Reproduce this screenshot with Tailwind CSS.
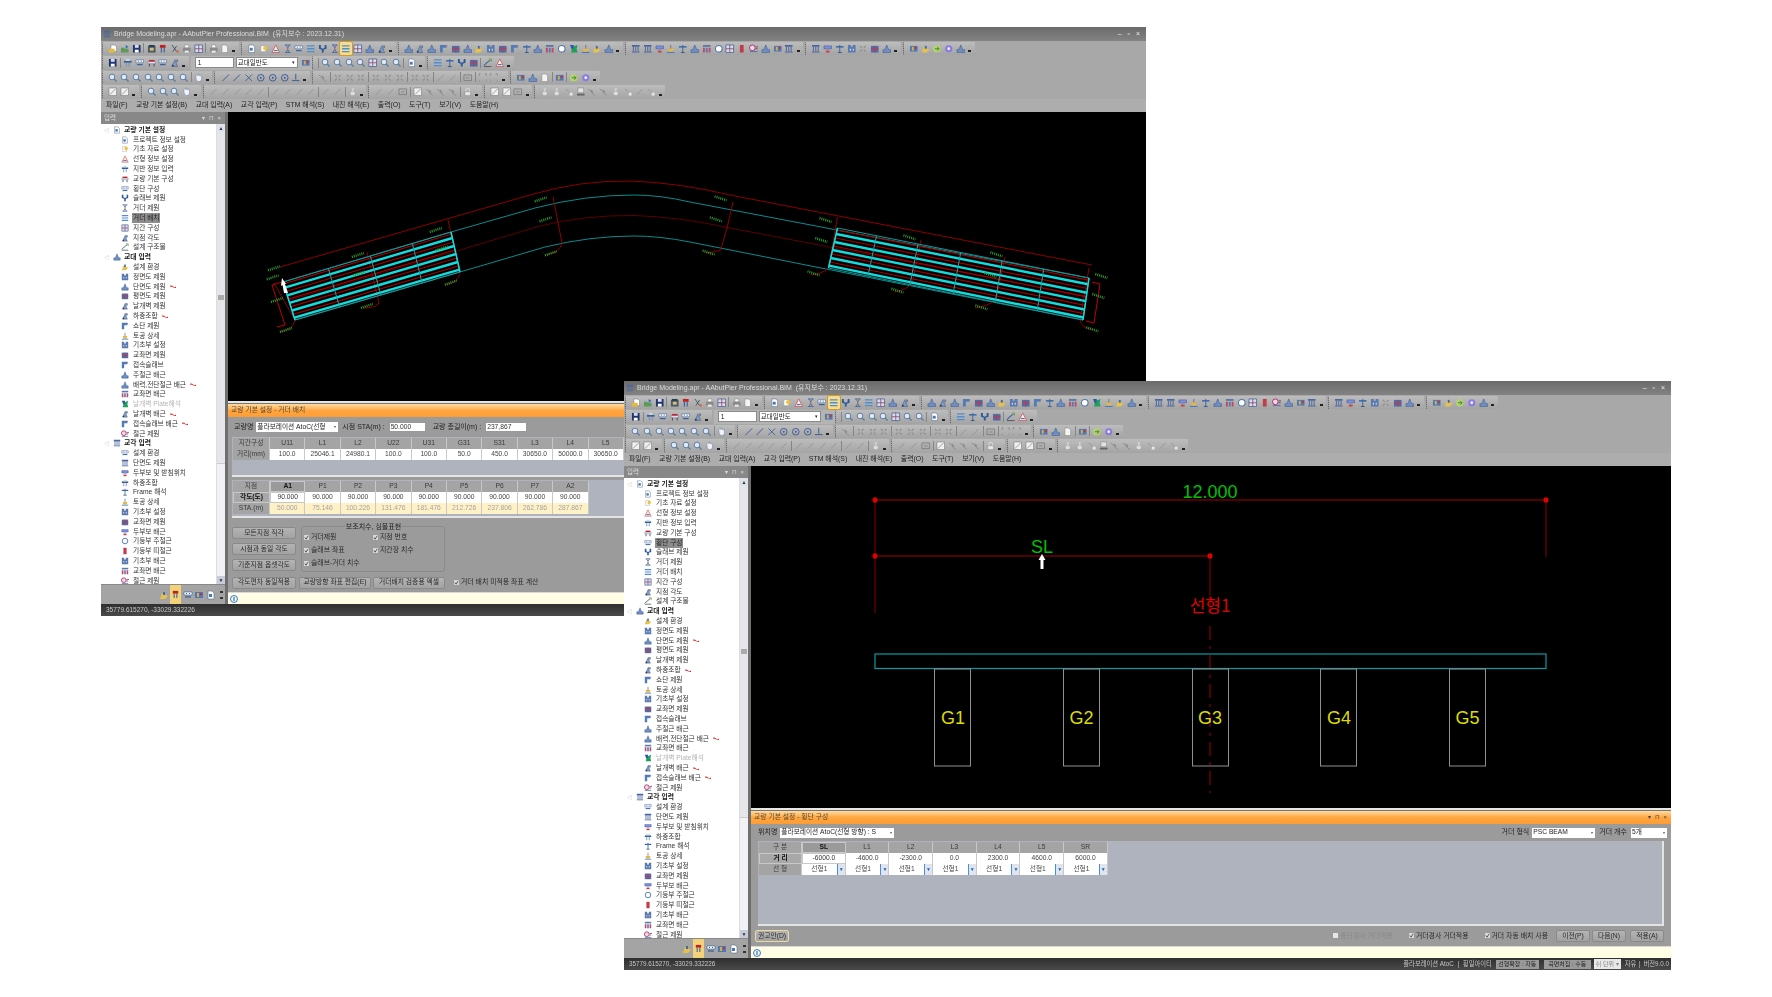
<!doctype html>
<html lang="ko">
<head>
<meta charset="utf-8">
<script src="https://cdn.jsdelivr.net/npm/@tailwindcss/browser@4"></script>
</head>
<body class="relative w-[1772px] h-[997px] overflow-hidden bg-white [font-family:Liberation_Sans,Noto_Sans_CJK_KR,sans-serif]">
<div id="w1" class="absolute left-[101px] top-[27px] w-[1045px] h-[589px]"></div>
<div id="w2" class="absolute left-[624px] top-[381px] w-[1047px] h-[589px]"></div>
<script>
const G={
a:'<path d="M3 1h4l2 2v5H3z" fill="#fff" stroke="#778" stroke-width=".6"/><path d="M1 5h6v4H1z" fill="#e8b83a"/>',
b:'<path d="M1 4h3l1 1h4v4H1z" fill="#5b9a58"/><path d="M6 1l3 2-3 2z" fill="#2f6fb5"/>',
s:'<path d="M1 1h8v8H1z" fill="#1f3570"/><path d="M3 1h4v3H3z" fill="#dde"/><path d="M3 6h4v3H3z" fill="#fff"/>',
k:'<path d="M1 2h8v7H1z" fill="#4a5a6a"/><path d="M3 4h4v3H3z" fill="#d9c070"/><path d="M2 1h6v2H2z" fill="#2d3d4d"/>',
x:'<path d="M2 1l5 7M7 2L3 8" stroke="#456" stroke-width="1" fill="none"/><circle cx="8" cy="8" r="1.3" fill="#d63"/>',
r:'<path d="M2 1h6v3H2z" fill="#c32020"/><path d="M3 4h1v5H3zM6 4h1v5H6z" fill="#1f4fa0"/>',
p:'<path d="M3 1h4v3H3z" fill="#fff" stroke="#777" stroke-width=".5"/><path d="M1 4h8v4H1z" fill="#8a8a8a"/><path d="M3 7h4v2H3z" fill="#eee"/>',
f:'<path d="M2 1h4l2 2v6H2z" fill="#f4f4f4" stroke="#888" stroke-width=".6"/>',
e:'<path d="M2 1h4l2 2v6H2z" fill="#fff" stroke="#55708f" stroke-width=".6"/><path d="M3 4h3v3H3z" fill="#4b78b0"/>',
y:'<path d="M2 2h5v6H2z" fill="#fff" stroke="#999" stroke-width=".5"/><circle cx="6.5" cy="4.5" r="2.2" fill="#f2c230"/>',
t:'<path d="M5 1l4 8H1z" fill="#f3e9e4" stroke="#c44" stroke-width=".7"/><path d="M3 7h4" stroke="#35a"/>',
u:'<path d="M1 3h8v2H1z" fill="#3b5f97"/><path d="M3 5h1v4H3zM6 5h1v4H6z" fill="#6b8cbc"/><path d="M3 1h4v2H3z" fill="#cdd7e5"/>',
h:'<path d="M2 2h6v2H2z" fill="#c23"/><path d="M1 4h8v2H1z" fill="#eef" stroke="#456" stroke-width=".4"/><path d="M2 6h1v3H2zM7 6h1v3H7z" fill="#445"/>',
w:'<path d="M1 2h8v3H1z" fill="#fff" stroke="#345f9a" stroke-width=".6"/><path d="M2 7h6" stroke="#345f9a" stroke-width="1.2"/><path d="M3 3h1v1H3zM6 3h1v1H6z" fill="#345f9a"/>',
v:'<path d="M1 1h2v3l2 1 2-1V1h2v4L6 6v3H4V6L1 5z" fill="#2b5a9a"/>',
q:'<path d="M2 1h6M2 9h6M3 1l2 3 2-3M3 9l2-3 2 3" stroke="#4a6d9e" fill="none"/><path d="M5 4v2" stroke="#c44"/>',
z:'<path d="M1 2h8M1 5h8M1 8h8" stroke="#4f8fd0" stroke-width="1.4"/>',
g:'<path d="M1 1h8v8H1z" fill="#d6dcf0" stroke="#37538a" stroke-width=".7"/><path d="M5 1v8M1 5h8" stroke="#8a3b5a" stroke-width=".8"/>',
A:'<path d="M5 1l2 5h2v3H1V6h2z" fill="#6f8fc4" stroke="#2f4f87" stroke-width=".5"/>',
B:'<path d="M2 9L5 2h3v2H6l2 5z" fill="#7a9ccb" stroke="#334" stroke-width=".4"/><circle cx="3" cy="8" r="1" fill="#335"/>',
C:'<path d="M1 1h7v3H4v5H1z" fill="#527cb6"/><path d="M8 1l1 1-1 1z" fill="#c44"/>',
D:'<path d="M1 8l3-3 4-3" stroke="#4a6aa0" stroke-width="1.2" fill="none"/><path d="M6 1h3v3" stroke="#7a3" fill="none"/><path d="M1 9h8" stroke="#555"/>',
E:'<path d="M1 9l2-6 6 3-3 3z" fill="#e7c24a"/><path d="M4 2h2v3H4z" fill="#3c6ab0"/>',
F:'<path d="M1 1h3v2h2V1h3v8H1z" fill="#5a79ae"/><path d="M3 5h1v2H3zM6 5h1v2H6z" fill="#e8eefa"/>',
H:'<path d="M1 2h8v7H1z" fill="#4a6fa8"/><path d="M5 2v7M1 5h8" stroke="#d0324a"/>',
I:'<path d="M1 1h8v2H1zM1 8h8v1H1z" fill="#4a67a0"/><path d="M2 3h1v5H2zM4.500 3h1v5h-1zM7 3h1v5H7z" fill="#4a67a0"/>',
J:'<path d="M1 2h8v3H6l-1 1-1-1H1z" fill="#7e8fe0" stroke="#334f8f" stroke-width=".5"/><path d="M3 7h4v2H3z" fill="#c44"/>',
K:'<path d="M5 1v8" stroke="#3565a8"/><path d="M1 3h8" stroke="#3565a8" stroke-width="1.5"/><path d="M3 9h4" stroke="#358"/>',
L:'<path d="M5 1v4" stroke="#6a7a90"/><path d="M2 5h6L7 8H3z" fill="#e6b63e"/><path d="M1 9h8" stroke="#37c"/>',
M:'<path d="M1 1h8v2H1z" fill="#5a78aa"/><path d="M1 4h2v5H1zM7 4h2v5H7z" fill="#c0486a"/><path d="M4 4h2v5H4z" fill="#5a78aa"/>',
N:'<circle cx="5" cy="5" r="3.5" fill="#fff" stroke="#4a74b0" stroke-width="1.1"/>',
O:'<path d="M3 1h4v8H3z" fill="#c23b48"/>',
P:'<circle cx="3.500" cy="4" r="3" fill="#f4d5e0" stroke="#b02a6a"/><path d="M7 3h3M7 5h2" stroke="#555"/><path d="M1 8h8" stroke="#4a74b0"/>',
Q:'<path d="M2 9l2-6 5-2-1 4 1 4z" fill="#1fa05a"/><path d="M1 1h4v3L3 6z" fill="#2c59b0"/>',
m:'<circle cx="4.200" cy="4.200" r="3" fill="#dfe8f4" stroke="#56789f"/><path d="M6.500 6.500L9 9" stroke="#56789f" stroke-width="1.300"/>',
o:'<path d="M2 4c0-2 1-3 1-3s1 0 1 2l1-2 1 2 1-1 1 3c0 3-1 4-3 4S2 7 2 4z" fill="#eef2fa" stroke="#6a7c99" stroke-width=".5"/>',
l:'<path d="M1.500 8.500L8.500 1.500" stroke="#3a5a9a" stroke-width="1"/>',
X:'<path d="M1.500 1.500l7 7M8.500 1.500l-7 7" stroke="#3a5a9a" stroke-width=".9"/>',
c:'<circle cx="5" cy="5" r="3.500" fill="none" stroke="#3a5a9a" stroke-width="1"/><circle cx="5" cy="5" r="1" fill="#3a5a9a"/>',
T:'<path d="M5 1v6M1 8h8" stroke="#3a5a9a" stroke-width="1"/>',
d:'<path d="M2 8l6-6" stroke="#8b8b8b" stroke-width="1" stroke-dasharray="2 .6"/>',
n:'<path d="M1 2l2 2 1-1 2 2-1 1 3 3" stroke="#8a8a8a" fill="none"/><circle cx="5" cy="5" r="1.300" fill="#8f8f8f"/>',
G:'<path d="M2 2l2 2m2 2l2 2M8 2L6 4M4 6L2 8" stroke="#8c8c8c" stroke-width="1.200"/>',
R:'<path d="M1 1h8v8H1z" fill="#f0f0f0" stroke="#777" stroke-width=".6"/><path d="M2 8l6-6" stroke="#999"/>',
S:'<path d="M3 5V3.500a2 2 0 0 1 4 0V5" stroke="#ddd" fill="none"/><path d="M2 5h6v4H2z" fill="#e8e8e8" stroke="#777" stroke-width=".4"/>',
U:'<path d="M1 3a4 4 0 0 1 8 0" stroke="#8a8a8a" fill="none"/><path d="M1 7a4 4 0 0 0 8 0" stroke="#999" fill="none"/>',
W:'<path d="M1 2h8v6H1z" fill="#4f78b8"/><path d="M3 3h2v4H3z" fill="#d6b13a"/><path d="M6 3h2v2H6z" fill="#d23"/>',
Y:'<circle cx="5" cy="5" r="3.800" fill="#b8d36a"/><path d="M3 5h4M5.500 3L7.500 5l-2 2" stroke="#2a8a2a" fill="none"/>',
Z:'<circle cx="5" cy="5" r="3.800" fill="#8a7ce0"/><circle cx="5" cy="5" r="1.500" fill="#eef"/>',
0:'<path d="M2 5h6l-1 4H3z" fill="#e0e0e0" stroke="#9a9a9a" stroke-width=".5"/><path d="M4 1h2v4H4z" fill="#d0d0d0"/>',
1:'<path d="M2 2l5 5" stroke="#a0a0a0" stroke-width="1.200"/><path d="M6 6h3v3H6z" fill="#e8e8e8"/>',
2:'<path d="M1 2h8v6H1z" fill="none" stroke="#777" stroke-width=".8"/><path d="M3 4h4v2H3z" fill="#9a9a9a"/>',
3:'<path d="M2 1h6v5H2z" fill="#e2e2e2" stroke="#777" stroke-width=".5"/><path d="M1 7h8v2H1z" fill="#666"/>'
};
const svg=(c,cls)=>`<svg viewBox="0 0 10 10" class="${cls}">${G[c]||''}</svg>`;
function bar(spec,hi){
  let out='',n=0;
  for(const c of spec){
    if(c==='|') out+='<span class="w-px h-[10px] mx-[1px] bg-[#858585] shrink-0"></span>';
    else if(c==='V') out+='<span class="w-[6px] flex justify-center items-end h-[8px] shrink-0"><span class="w-[3px] h-[2px] bg-[#222]"></span></span>';
    else { out+=`<span class="w-[11.8px] h-[13px] flex items-center justify-center shrink-0 ${n===hi?'bg-[#f5dc8e] outline outline-[#d19a2a] rounded-[1px]':''}">${svg(c,'w-[9.500px] h-[9.500px]')}</span>`; n++; }
  }
  return `<div class="flex items-center h-[13.500px] pl-[4px] pr-[2px] mr-[2px] rounded-[1px] bg-gradient-to-b from-[#bdbdbd] to-[#a4a4a4] border-l border-dotted border-[#555]">${out}</div>`;
}
const rowW='flex items-center h-[14.500px] pl-[1px]';
function toolbars(hi){
 return `<div class="h-[58px] bg-[#a8a8a8] shrink-0 overflow-hidden blur-[0.35px]">
  <div class="${rowW}">${bar('abs|krxpg|pfV')}${bar('eytqwz'+'vqzgAB'+'V',hi)}${bar('ABACHAEFHCKAMNQLEAV')}${bar('IIJLKAMNgOPAWIV')}${bar('IJKFGHAV')}${bar('WEYZAV')}</div>
  <div class="${rowW}">${bar('s|uwhwBV')}<div class="flex items-center h-[13.500px] gap-[2px] bg-[#b4b4b4] pl-[4px]"><span class="w-[39px] h-[11px] bg-white border border-[#8a8a8a] text-[6.700px] leading-[10px] pl-[2px] text-[#222]">1</span><span class="w-[62px] h-[11px] bg-white border border-[#8a8a8a] text-[6.500px] leading-[9px] pl-[1px] text-[#222] flex justify-between">교대일반도<span class="text-[5px] pr-[2px]">▾</span></span><span class="w-[12px] flex justify-center">${svg('W','w-[9.500px] h-[9.500px]')}</span></div>${bar('|mmmmgmm|eV')}${bar('zKvH|DtV')}</div>
  <div class="${rowW}">${bar('mmmmmmm|oV')}${bar('llXcccTV')}${bar('n|GGG|GGG|GG|dd|2|UUV')}${bar('WAf|W|YZV')}</div>
  <div class="${rowW}">${bar('RRV')}${bar('mmmoV')}${bar('ddddd|dddd|dd|0V')}${bar('dd2|Rnnn|SV')}${bar('RR2V')}${bar('0013nn01d1V')}</div>
 </div>`;
}
const MENU=['파일(F)','교량 기본 설정(B)','교대 입력(A)','교각 입력(P)','STM 해석(S)','내진 해석(E)','출력(O)','도구(T)','보기(V)','도움말(H)'];
const TREE=[
['g','교량 기본 설정','e'],['c','프로젝트 정보 설정','e'],['c','기초 자료 설정','y'],['c','선형 정보 설정','t'],['c','지반 정보 입력','u'],['c','교량 기본 구성','h'],['c','횡단 구성','w'],['c','슬래브 제원','v'],['c','거더 제원','q'],['c','거더 배치','z'],['c','지간 구성','g'],['c','지점 각도','B'],['c','설계 구조물','D'],
['g','교대 입력','A'],['c','설계 환경','E'],['c','정면도 제원','F'],['c','단면도 제원','A',1],['c','평면도 제원','H'],['c','날개벽 제원','B'],['c','하중조합','B',1],['c','쇼단 제원','C'],['c','토공 상세','L'],['c','기초부 설정','F'],['c','교좌면 제원','H'],['c','접속슬래브','C'],['c','주철근 배근','A'],['c','배력,전단철근 배근','A',1],['c','교좌면 배근','M'],['c','날개벽 Plate해석','Q',0,1],['c','날개벽 배근','B',1],['c','접속슬래브 배근','C',1],['c','철근 제원','P'],
['g','교각 입력','I'],['c','설계 환경','w'],['c','단면도 제원','I'],['c','두부보 및 받침위치','J'],['c','하중조합','u'],['c','Frame 해석','K'],['c','토공 상세','L'],['c','기초부 설정','F'],['c','교좌면 제원','H'],['c','두부보 배근','J'],['c','기둥부 주철근','N'],['c','기둥부 띠철근','O'],['c','기초부 배근','F'],['c','교좌면 배근','M'],['c','철근 제원','P']];
function tree(sel){
 return TREE.map(([k,t,ic,red,dis])=> k==='g'
  ? `<div class="flex items-center h-[9.800px] shrink-0 pl-[3px]"><span class="w-[8px] text-[5px] leading-[8px] text-[#aaa]">◁</span>${svg(ic,'w-[8px] h-[8px] ml-[1px] mr-[3px]')}<span class="text-[6.800px] font-bold text-[#222]">${t}</span></div>`
  : `<div class="flex items-center h-[9.800px] shrink-0 pl-[20px]">${svg(ic,'w-[8px] h-[8px] mr-[3px] shrink-0')}<span class="text-[6.700px] px-[1px] whitespace-nowrap ${t===sel?'bg-[#8d8d8d] text-[#222]':dis?'text-[#b5b5b5]':'text-[#333]'}">${t}</span>${red?'<svg viewBox="0 0 8 4" class="ml-[3px] w-[6px] h-[3px]"><path d="M0 1q2-1 4 1t4 0v2Q5 4 4 3T0 2z" fill="#e01818"/></svg>':''}</div>`).join('');
}
function sidebar(sel){
 return `<div class="w-[124px] shrink-0 flex flex-col blur-[0.35px]">
  <div class="h-[12px] shrink-0 flex items-center justify-between bg-[#888] px-[3px] text-[6.500px] text-[#ddd]"><span>입력</span><span class="tracking-[1px] text-[6px]">▾ ⊓ ×</span></div>
  <div class="h-[460px] bg-white flex overflow-hidden shrink-0">
    <div class="flex-1 min-w-0 flex flex-col overflow-hidden pt-[1px]">${tree(sel)}</div>
    <div class="w-[9px] shrink-0 flex flex-col bg-[#f2f2f6] border-l border-[#ddd]">
      <div class="h-[8px] bg-[#dfe2ea] flex items-center justify-center"><span class="text-[5px] leading-[6px] text-[#234]">▲</span></div>
      <div class="h-[332px] bg-[#e6e6ea] border-b border-[#ccc] flex items-center justify-center"><span class="w-[6px] h-[5px] bg-[#aaa]"></span></div>
      <div class="flex-1"></div>
      <div class="h-[8px] bg-[#c9ccd6] flex items-center justify-center"><span class="text-[5px] leading-[6px] text-[#234]">▼</span></div>
    </div>
  </div>
  <div class="flex-1 bg-[#a4a4a4] border-t border-[#888] flex items-center justify-end pr-[2px] gap-[1.500px]">
    ${svg('E','w-[10px] h-[10px]')}<span class="h-full w-[11px] bg-[#f3d27a] flex items-center justify-center">${svg('r','w-[9px] h-[9px]')}</span>${svg('w','w-[10px] h-[10px]')}${svg('W','w-[10px] h-[10px]')}${svg('e','w-[10px] h-[10px]')}<span class="ml-[3px] w-[3px] h-[8px] border-y-2 border-[#333]"></span>
  </div>
 </div>`;
}
function chrome(title,hi,sel,canvas,panel,status,panelH){
 return `<div class="w-full h-full flex flex-col bg-[#9b9b9b]">
 <div class="h-[14px] shrink-0 flex items-center justify-between bg-gradient-to-b from-[#6b6b6b] to-[#838383] pl-[2px] pr-[4px] text-[7px] text-[#dcdcdc] blur-[0.35px]"><span class="flex items-center gap-[3px]">${svg('I','w-[8px] h-[8px]')}<span>${title}</span></span><span class="tracking-[2px] text-[7px] text-[#eee]">‒ ▫ ×</span></div>
 ${toolbars(hi)}
 <div class="h-[13px] shrink-0 bg-[#adadad] flex items-center pl-[5px] gap-[8.600px] text-[6.900px] text-[#222] blur-[0.35px]">${MENU.map(m=>`<span class="whitespace-nowrap">${m}</span>`).join('')}</div>
 <div class="flex-1 min-h-0 flex">
  ${sidebar(sel)}
  <div class="w-[3px] bg-[#6f6f6f] shrink-0"></div>
  <div class="flex-1 min-w-0 flex flex-col">
    <div class="flex-1 min-h-0 bg-black overflow-hidden">${canvas}</div>
    <div class="h-[3px] shrink-0 bg-[#e6e6e6] border-b border-[#777]"></div>
    <div class="shrink-0 flex flex-col blur-[0.35px] ${panelH}">${panel}</div>
  </div>
 </div>
 ${status}
 </div>`;
}
const chk='<svg viewBox="0 0 6 6" class="w-[5px] h-[5px]"><path d="M1 3l1.500 2L5 1" fill="none" stroke="#333" stroke-width=".9"/></svg>';
const cb=(t,on=1,dis=0)=>`<span class="inline-flex items-center gap-[1px] whitespace-nowrap text-[6.900px] ${dis?'text-[#8a8a8a]':'text-[#2a2a2a]'}"><span class="w-[7px] h-[7px] shrink-0 ${dis?'bg-[#e6e6e6]':'bg-[#d8d8d8]'} border border-[#999] flex items-center justify-center">${on?chk:''}</span>${t}</span>`;
const btn=(t,w,yl)=>`<span class="${w} h-[12px] shrink-0 flex items-center justify-center rounded-[2px] border ${yl?'border-[#ead9a0]':'border-[#8a8a8a]'} bg-gradient-to-b from-[#b4b4b4] to-[#a2a2a2] text-[6.800px] text-[#2a2a2a] whitespace-nowrap">${t}</span>`;
const input=(t,w)=>`<span class="${w} h-[10px] bg-white border border-[#999] text-[6.700px] leading-[8px] pl-[1px] text-[#333]">${t}</span>`;
const select=(t,w)=>`<span class="${w} h-[10px] bg-white flex items-center justify-between text-[6.700px] px-[1px] text-[#222] whitespace-nowrap overflow-hidden"><span>${t}</span><span class="text-[4px] text-[#555] px-[1px]">▾</span></span>`;
const otitle=(t,r)=>`<div class="h-[13px] shrink-0 bg-gradient-to-b from-[#ffdca0] via-[#ffa640] to-[#ff9c33] flex items-center justify-between px-[3px] text-[6.800px] text-[#5a4a30]"><span>${t}</span>${r?'<span class="tracking-[1px] text-[6px] text-[#444]">▾ ⊓ ×</span>':''}</div>`;
const info=`<div class="h-[12px] shrink-0 bg-[#fffde4] border-t border-[#d8d8d8] flex items-center pl-[2px]"><svg viewBox="0 0 10 10" class="w-[8px] h-[8px]"><circle cx="5" cy="5" r="4.300" fill="#fff" stroke="#1f6fc0" stroke-width="1.200"/><path d="M5 2.500v5" stroke="#1f6fc0" stroke-width="1.500"/></svg></div>`;
const cell=(t,w,k)=>{
 const m={h:'bg-[#a4a4a4] text-[#3a3a3a]',hs:'bg-[#9a9a9a] font-bold text-[#111] border border-[#707070]',rh:'bg-[#a4a4a4] text-[#3a3a3a]',rb:'bg-[#a8a8a8] font-bold text-[#111] border border-[#555]',d:'bg-white text-[#444]',ds:'bg-white text-[#333] border border-[#333]',y:'bg-[#fff1c6] text-[#a3a3a3]'};
 return `<span class="${w} h-full shrink-0 flex items-center justify-center text-[6.700px] whitespace-nowrap border-r border-[#c8c8c8] ${m[k]}">${t}</span>`;
};
const trow=(h)=>`<div class="flex h-[11px]">${h}</div>`;
const W1C=['U11','L1','L2','U22','U31','G31','S31','L3','L4','L5'],W1D=['100.0','25046.1','24980.1','100.0','100.0','50.0','450.0','30650.0','50000.0','30650.0'];
const W1P=['A1','P1','P2','P3','P4','P5','P6','P7','A2'],W1S=['50.000','75.146','100.226','131.476','181.476','212.726','237.806','262.786','287.867'];
const panel1=otitle('교량 기본 설정 - 거더 배치')+`<div class="flex-1 flex flex-col min-h-0 pl-[4px] pt-[5px] bg-[#9b9b9b]">
 <div class="h-[10px] flex items-center text-[7px] text-[#222] whitespace-nowrap pl-[2px]"><span class="mr-[3px]">교량명</span>${select('플라보레이션 AtoC(선형','w-[82px]')}<span class="ml-[4px] mr-[4px]">시점 STA(m) :</span>${input('50.000','w-[37px]')}<span class="ml-[7px] mr-[4px]">교량 총길이(m) :</span>${input('237,867','w-[42px]')}</div>
 <div class="mt-[5px] h-[40px] bg-[#afb3be] border-b-2 border-[#e4e4e4] pt-[1px] pl-[1px] overflow-hidden">
  ${trow(cell('지간구성','w-[37px]','rh')+W1C.map(c=>cell(c,'w-[35.400px]','h')).join(''))}
  ${trow(cell('거리(mm)','w-[37px]','rh')+W1D.map(c=>cell(c,'w-[35.400px]','d')).join(''))}
 </div>
 <div class="mt-[3px] h-[38px] bg-[#afb3be] border-b-2 border-[#e4e4e4] pt-[1px] pl-[1px] overflow-hidden">
  ${trow(cell('지점','w-[37px]','rh')+W1P.map((c,i)=>cell(c,'w-[35.400px]',i?'h':'hs')).join(''))}
  ${trow(cell('각도(도)','w-[37px]','rb')+W1P.map((c,i)=>cell('90.000','w-[35.400px]',i?'d':'ds')).join(''))}
  ${trow(cell('STA.(m)','w-[37px]','rh')+W1S.map(c=>cell(c,'w-[35.400px]','y')).join(''))}
 </div>
 <div class="mt-[8px] flex h-[47px]">
  <div class="w-[64px] flex flex-col gap-[4px] pt-[1px]">${btn('모든지점 직각','w-[64px]')}${btn('시점과 동일 각도','w-[64px]')}${btn('기준지점 옵셋각도','w-[64px]')}</div>
  <fieldset class="ml-[5px] -mt-[3px] w-[144px] h-[49px] border border-[#8a8a8a] rounded-[3px] pl-[1px]">
   <legend class="mx-auto px-[1px] text-[7px] leading-[7px] text-[#222]">보조치수, 심볼표현</legend>
   <div class="grid grid-cols-[69px_1fr] auto-rows-[13px] items-center pt-[1px]">${cb('거더제원')}${cb('지점 번호')}${cb('슬래브 좌표')}${cb('지간장 치수')}${cb('슬래브-거더 치수')}</div>
  </fieldset>
 </div>
 <div class="mt-[3px] flex items-center h-[13px]">${btn('각도편차 동일적용','w-[64px]')}<span class="w-[3px]"></span>${btn('교량방향 좌표 편집(E)','w-[72px]')}<span class="w-[2px]"></span>${btn('거더배치 검증용 엑셀','w-[72px]')}<span class="w-[8px]"></span>${cb('거더 배치 미적용 좌표 계산')}</div>
</div>`+info;
const W2C=['L1','L2','L3','L4','L5','SR'],W2D=['-4600.0','-2300.0','0.0','2300.0','4600.0','6000.0'];
const sel2=`<span class="w-[43.700px] h-full shrink-0 flex bg-white text-[6.700px] text-[#444] border-r border-[#c8c8c8]"><span class="flex-1 flex items-center justify-center">선형1</span><span class="w-[8px] bg-[#dfe4ee] border-l border-[#4a90d9] flex items-center justify-center"><span class="text-[5px] leading-[5px] text-[#1a66b8]">▼</span></span></span>`;
const panel2=otitle('교량 기본 설정 - 횡단 구성',1)+`<div class="flex-1 flex flex-col min-h-0 px-[7px] bg-[#9b9b9b]">
 <div class="h-[17px] flex items-center text-[7px] text-[#222] whitespace-nowrap"><span class="mr-[3px]">위치명</span>${select('플라보레이션 AtoC(선형 방향) : S','w-[114px]')}<span class="ml-auto mr-[3px]">거더 형식</span>${select('PSC BEAM','w-[63px]')}<span class="ml-[4px] mr-[4px]">거더 개수</span><span class="mr-[-3px]">${select('5개','w-[36px]')}</span></div>
 <div class="h-[85px] bg-[#afb3be] border-r-2 border-b-2 border-[#e4e4e4] pt-[1px] pl-[1px]">
  ${trow(cell('구 분','w-[43px]','rh')+cell('SL','w-[43.700px]','hs')+W2C.map(c=>cell(c,'w-[43.700px]','h')).join(''))}
  ${trow(cell('거 리','w-[43px]','rb')+cell('-6000.0','w-[43.700px]','ds')+W2D.map(c=>cell(c,'w-[43.700px]','d')).join(''))}
  ${trow(cell('선 형','w-[43px]','rh')+Array(7).fill(sel2).join(''))}
 </div>
 <div class="flex-1 flex items-center -ml-[3px]">${btn('권고안(D)','w-[34px]',1)}<span class="ml-auto flex items-center">${cb('종단경사 거더적용',0,1)}<span class="w-[15px]"></span>${cb('거더경사 거더적용')}<span class="w-[15px]"></span>${cb('거더 자동 배치 사용')}<span class="w-[8px]"></span>${btn('이전(P)','w-[34px]')}<span class="w-[2px]"></span>${btn('다음(N)','w-[34px]')}<span class="w-[4px]"></span>${btn('적용(A)','w-[34px]')}</span></div>
</div>`+info;
const status1=`<div class="h-[12px] shrink-0 bg-gradient-to-b from-[#2f2f2f] to-[#4a4a4a] flex items-center pl-[5px] text-[6.500px] text-[#c8c8c8] blur-[0.3px]">35779.615270,  -33029.332226</div>`;
const status2=`<div class="h-[12px] shrink-0 bg-gradient-to-b from-[#2f2f2f] to-[#4a4a4a] flex items-center pl-[5px] pr-[2px] justify-between text-[6.300px] text-[#c8c8c8] whitespace-nowrap blur-[0.3px]"><span>35779.615270,  -33029.332226</span><span class="flex items-center h-full">플라보레이션 AtoC<span class="mx-[4px] w-px h-[7px] bg-[#888]"></span>횡일아이티<span class="ml-[4px] w-[43px] h-[9px] bg-[#9a9a9a] text-[#222] text-[6px] flex items-center justify-center">선형확장 : 자동</span><span class="ml-[5px] w-[47px] h-[9px] bg-[#9a9a9a] text-[#222] text-[6px] flex items-center justify-center">곡면처짐 : 수동</span><span class="ml-[3px] w-[27px] h-[10px] bg-[#e8e8e8] text-[#888] text-[6px] flex items-center justify-center">쉬 단위 ▾</span><span class="ml-[4px]">자유</span><span class="mx-[3px] w-px h-[7px] bg-[#888]"></span>버전9.0.0</span></div>`;
const lerp=(a,b,t)=>[a[0]+(b[0]-a[0])*t,a[1]+(b[1]-a[1])*t];
function block(TL,TR,BR,BL,cross){
 let s='';
 const ln=(p,q,c,w,e='')=>`<line x1="${p[0].toFixed(1)}" y1="${p[1].toFixed(1)}" x2="${q[0].toFixed(1)}" y2="${q[1].toFixed(1)}" stroke="${c}" stroke-width="${w}" ${e}/>`;
 [.05,.25,.45,.65,.85].forEach(t=>{s+=ln(lerp(TL,BL,t),lerp(TR,BR,t),'#a00000',1.200)});
 [.15,.35,.55,.75,.94].forEach(t=>{s+=ln(lerp(TL,BL,t),lerp(TR,BR,t),'#12dcdc',2.400)});
 cross.forEach(t=>{s+=ln(lerp(TL,TR,t),lerp(BL,BR,t),'#18a8ac',1)});
 s+=`<path d="M${TL}L${TR}L${BR}L${BL}Z" fill="none" stroke="#0e9a9a" stroke-width="1"/>`;
 s+=ln(TL,BL,'#1ad8d8',1.500)+ln(TR,BR,'#1ad8d8',1.500);
 return s;
}
const LBL=[[90,325,-1],[88,352,-1],[95,420,-1],[110,510,-1],[230,285,-1],[232,340,-1],[245,438,-1],[360,210,-1],[370,265,-1],[385,368,-1],[535,118,-1],[543,178,-1],[552,280,-1],[835,115,1],[827,178,1],[815,278,1],[1010,180,1],[1003,240,1],[990,340,1],[1150,232,1],[1130,392,1],[1295,283,1],[1285,345,1],[1270,442,1],[1470,348,1],[1465,408,1],[1455,508,1]];
const lbls=LBL.map(([x,y,d])=>{const X=220+x/1.668,Y=160+y/3;return `<line x1="${X-6}" y1="${Y-2*d}" x2="${X+6}" y2="${Y+2*d}" stroke="#2f9a2f" stroke-width="2.500" stroke-dasharray="1 1"/>`}).join('');
const canvas1=`<svg viewBox="228 112 918 288" preserveAspectRatio="xMinYMin" class="block w-full h-full">
 <g fill="none">
 <path d="M280 267L530 195Q580 180 632 181Q680 183 730 195L1092 265" stroke="#8a0000"/>
 <path d="M283 282L451 232L535 208Q585 195 634 195Q660 195 690 202L1089 278" stroke="#0c8a8e"/>
 <path d="M290 300L460 250L540 226Q585 215 634 215.500Q680 217 730 228L1086 296" stroke="#5a0000"/>
 <path d="M295 320L460 272L545 247Q590 236 634 236Q660 236 690 242L1083 320" stroke="#0c8a8e"/>
 <g stroke="#8f0000">
 <path d="M553 197L562 243Q560 252 547 255"/><path d="M733 202L727 228L720.600 250Q716 252 705.600 253"/>
 <path d="M367 252L379 303Q376 308 364 308"/><path d="M448 220L460 273Q458 283 445 285"/>
 <path d="M837.500 217L828.500 268Q822 274 810.500 275"/><path d="M921 240L912.500 283Q906 290 894.500 292"/><path d="M1005 257L996 300Q988 306 975 308"/><path d="M1089 268L1080 320Q1082 328 1092 330"/><path d="M274 283L295 320Q293 330 280 332"/>
 <path d="M282 282L272 285L285 325L277 327" stroke="#c00000"/><path d="M1092 282L1100 284L1094 323L1086 321" stroke="#c00000"/>
 </g></g>
 ${block([283,282],[451,232],[460,272],[295,320],[.27,.52,.77])}
 ${block([837.5,228],[1089,278],[1083,320],[828.500,268],[.155,.32,.49,.655,.82])}
 ${lbls}
 <path d="M282 278L286 284L285 284L288 293L284 293L282.500 285L281 286Z" fill="#fff"/>
</svg>`;
const canvas2=`<svg viewBox="751 466 920 341" preserveAspectRatio="xMinYMin" class="block w-full h-full">
 <g fill="none" stroke="#8a0000"><path d="M875 500H1546M875 556H1210" stroke="#a00000" stroke-width="1.200"/><path d="M875 500V613M1546 500V557M1210 556V612"/>
 <path d="M1210 626V793" stroke="#a00000" stroke-dasharray="14 6 3 6"/></g>
 <g fill="#e00000"><ellipse cx="875" cy="500" rx="2.500" ry="2.800"/><ellipse cx="1546" cy="500" rx="2.500" ry="2.800"/><ellipse cx="875" cy="556" rx="2.500" ry="2.800"/><ellipse cx="1210" cy="556" rx="2.500" ry="2.800"/></g>
 <rect x="875" y="654" width="671" height="14.500" fill="none" stroke="#0d9a9e" stroke-width="1.200"/>
 <g fill="none" stroke="#909090"><rect x="934.500" y="669" width="36" height="97"/><rect x="1063.500" y="669" width="36" height="97"/><rect x="1192.500" y="669" width="36" height="97"/><rect x="1320.500" y="669" width="36" height="97"/><rect x="1449.500" y="669" width="36" height="97"/></g>
 <g font-size="18" text-anchor="middle" font-family="Liberation Sans, Noto Sans CJK KR, sans-serif">
 <text x="1210" y="498" fill="#00c000">12.000</text><text x="1042" y="553" fill="#00c000">SL</text>
 <text x="1210" y="612" fill="#e00000" font-family="Noto Sans CJK KR, sans-serif" font-size="17">선형1</text>
 <g fill="#dcdc00"><text x="953" y="724">G1</text><text x="1081.500" y="724">G2</text><text x="1210" y="724">G3</text><text x="1339" y="724">G4</text><text x="1467.500" y="724">G5</text></g></g>
 <path d="M1042 554L1045.500 560H1043.500V569H1040.500V560H1038.500Z" fill="#fff"/>
</svg>`;
const T='Bridge Modeling.apr - AAbutPier Professional.BIM &nbsp;(유지보수 : 2023.12.31)';
document.getElementById('w1').innerHTML=chrome(T,8,'거더 배치',canvas1,panel1,status1,'h-[200px]');
document.getElementById('w2').innerHTML=chrome(T,5,'횡단 구성',canvas2,panel2,status2,'h-[147px]');
</script>
</body>
</html>
